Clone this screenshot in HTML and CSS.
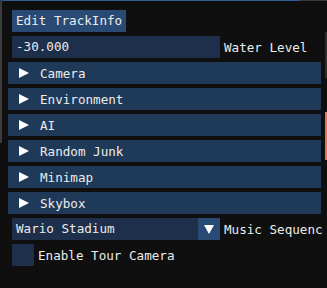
FILE: index.html
```html
<!DOCTYPE html>
<html lang="en">
<head>
    <meta charset="UTF-8">
    <title>Track Info</title>
    <link rel="stylesheet" href="styles.css">
</head>
<body>
    <div class="edge-top"></div>
    <div class="edge-left"></div>
    <div class="edge-right"></div>
    <div class="edge-accent"></div>

    <div class="window">
        <div class="btn">Edit TrackInfo</div>

        <div class="field-row">
            <div class="input">-30.000</div>
            <span class="label">Water Level</span>
        </div>

        <div class="header"><svg class="arrow" width="10" height="10" viewBox="0 0 10 10"><polygon points="0,0 10,5 0,10" fill="#fff"/></svg><span>Camera</span></div>
        <div class="header"><svg class="arrow" width="10" height="10" viewBox="0 0 10 10"><polygon points="0,0 10,5 0,10" fill="#fff"/></svg><span>Environment</span></div>
        <div class="header"><svg class="arrow" width="10" height="10" viewBox="0 0 10 10"><polygon points="0,0 10,5 0,10" fill="#fff"/></svg><span>AI</span></div>
        <div class="header"><svg class="arrow" width="10" height="10" viewBox="0 0 10 10"><polygon points="0,0 10,5 0,10" fill="#fff"/></svg><span>Random Junk</span></div>
        <div class="header"><svg class="arrow" width="10" height="10" viewBox="0 0 10 10"><polygon points="0,0 10,5 0,10" fill="#fff"/></svg><span>Minimap</span></div>
        <div class="header"><svg class="arrow" width="10" height="10" viewBox="0 0 10 10"><polygon points="0,0 10,5 0,10" fill="#fff"/></svg><span>Skybox</span></div>

        <div class="field-row">
            <div class="combo">
                <span class="combo-value">Wario Stadium</span>
                <span class="combo-btn"><svg width="10" height="9" viewBox="0 0 10 9"><polygon points="0,0 10,0 5,9" fill="#fff"/></svg></span>
            </div>
            <span class="label">Music Sequence</span>
        </div>

        <div class="field-row">
            <div class="checkbox"></div>
            <span class="label">Enable Tour Camera</span>
        </div>
    </div>
</body>
</html>
```

FILE: styles.css
```css
body {
    margin: 0;
    width: 327px;
    height: 288px;
    overflow: hidden;
    position: relative;
    background-color: #0f0f0f;
    font-family: "DejaVu Sans Mono", monospace;
    font-size: 12.6px;
    color: #ececec;
}

/* bits of neighbouring windows peeking in */
.edge-top {
    position: absolute;
    top: 0;
    left: 0;
    width: 327px;
    height: 1px;
    background: linear-gradient(to right, #2f5a94 300px, #3a3a3a 300px);
}

.edge-left {
    position: absolute;
    top: 0;
    left: 0;
    width: 2px;
    height: 143px;
    background-color: #3c3c3c;
}

.edge-right {
    position: absolute;
    top: 32px;
    left: 325px;
    width: 2px;
    height: 46px;
    background-color: #2e2e2e;
}

.edge-accent {
    position: absolute;
    top: 112px;
    left: 325px;
    width: 2px;
    height: 48px;
    background-color: #e4744f;
}

.window {
    width: 315px;
    padding: 10px 0 0 8px;
    display: flex;
    flex-direction: column;
    gap: 4px;
    overflow: hidden;
}

.btn {
    align-self: flex-start;
    margin-left: 4px;
    height: 22px;
    line-height: 22px;
    padding: 0 4px;
    background-color: #284a74;
    white-space: pre;
}

.field-row {
    display: flex;
    align-items: center;
    gap: 4px;
    margin-left: 4px;
    height: 22px;
    white-space: pre;
}

.input {
    flex-shrink: 0;
    width: 200px;
    height: 22px;
    line-height: 22px;
    padding: 0 4px;
    background-color: #1d2f4a;
}

.label {
    flex-shrink: 0;
}

.header {
    width: 313px;
    height: 22px;
    display: flex;
    align-items: center;
    background-color: #1f3958;
    white-space: pre;
}

.arrow {
    margin-left: 11px;
    margin-right: 11px;
    flex-shrink: 0;
}

.combo {
    flex-shrink: 0;
    width: 208px;
    height: 22px;
    display: flex;
    background-color: #1d2f4a;
}

.combo-value {
    flex: 1;
    line-height: 22px;
    padding-left: 4px;
}

.combo-btn {
    width: 22px;
    height: 22px;
    display: flex;
    align-items: center;
    justify-content: center;
    background-color: #284a74;
}

.checkbox {
    width: 22px;
    height: 22px;
    flex-shrink: 0;
    background-color: #1d2f4a;
}
```
